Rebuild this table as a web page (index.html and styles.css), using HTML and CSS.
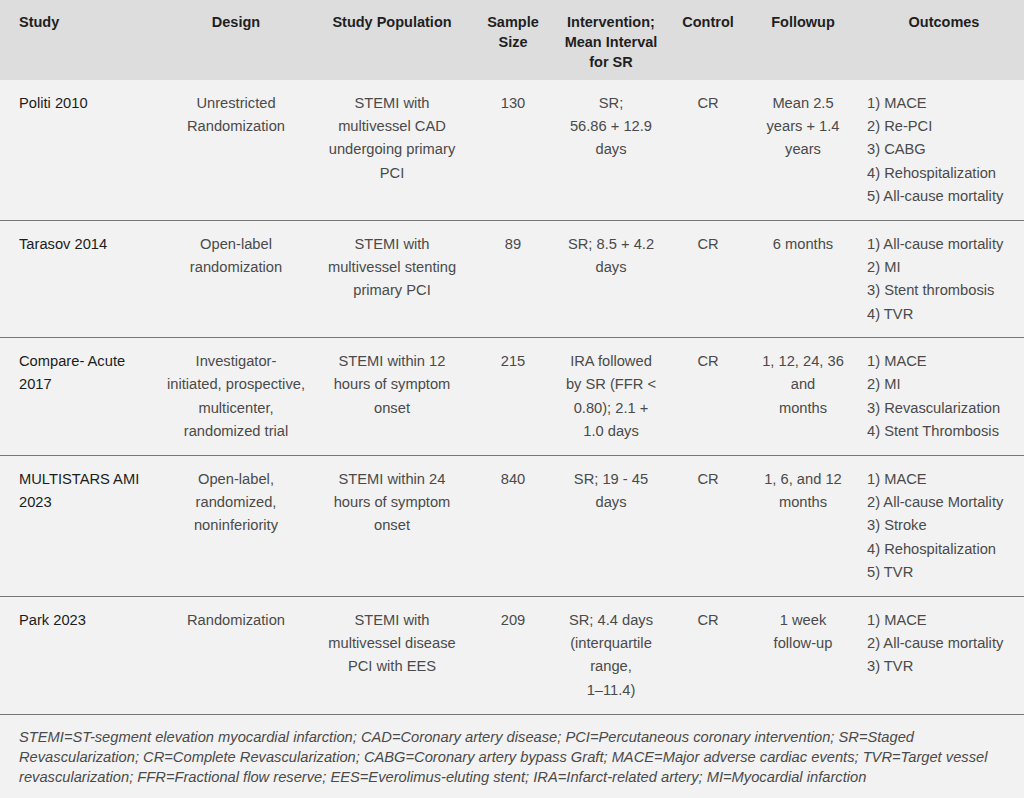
FILE: index.html
```html
<!DOCTYPE html>
<html lang="en">
<head>
<meta charset="utf-8">
<title>Staged vs complete revascularization trials</title>
<link rel="stylesheet" href="styles.css">
</head>
<body>
<div class="page">
  <table class="trials">
    <colgroup>
      <col class="c-study">
      <col class="c-design">
      <col class="c-pop">
      <col class="c-size">
      <col class="c-int">
      <col class="c-ctrl">
      <col class="c-fu">
      <col class="c-out">
    </colgroup>
    <thead>
      <tr>
        <th class="study">Study</th>
        <th>Design</th>
        <th>Study Population</th>
        <th>Sample<br>Size</th>
        <th>Intervention;<br>Mean Interval<br>for SR</th>
        <th>Control</th>
        <th>Followup</th>
        <th class="out">Outcomes</th>
      </tr>
    </thead>
    <tbody>
      <tr>
        <td class="study">Politi 2010</td>
        <td>Unrestricted<br>Randomization</td>
        <td>STEMI with<br>multivessel CAD<br>undergoing primary<br>PCI</td>
        <td>130</td>
        <td>SR;<br>56.86 + 12.9<br>days</td>
        <td>CR</td>
        <td>Mean 2.5<br>years + 1.4<br>years</td>
        <td class="out">1) MACE<br>2) Re-PCI<br>3) CABG<br>4) Rehospitalization<br>5) All-cause mortality</td>
      </tr>
      <tr>
        <td class="study">Tarasov 2014</td>
        <td>Open-label<br>randomization</td>
        <td>STEMI with<br>multivessel stenting<br>primary PCI</td>
        <td>89</td>
        <td>SR; 8.5 + 4.2<br>days</td>
        <td>CR</td>
        <td>6 months</td>
        <td class="out">1) All-cause mortality<br>2) MI<br>3) Stent thrombosis<br>4) TVR</td>
      </tr>
      <tr>
        <td class="study">Compare- Acute<br>2017</td>
        <td>Investigator-<br>initiated, prospective,<br>multicenter,<br>randomized trial</td>
        <td>STEMI within 12<br>hours of symptom<br>onset</td>
        <td>215</td>
        <td>IRA followed<br>by SR (FFR &lt;<br>0.80); 2.1 +<br>1.0 days</td>
        <td>CR</td>
        <td>1, 12, 24, 36<br>and<br>months</td>
        <td class="out">1) MACE<br>2) MI<br>3) Revascularization<br>4) Stent Thrombosis</td>
      </tr>
      <tr>
        <td class="study">MULTISTARS AMI<br>2023</td>
        <td>Open-label,<br>randomized,<br>noninferiority</td>
        <td>STEMI within 24<br>hours of symptom<br>onset</td>
        <td>840</td>
        <td>SR; 19 - 45<br>days</td>
        <td>CR</td>
        <td>1, 6, and 12<br>months</td>
        <td class="out">1) MACE<br>2) All-cause Mortality<br>3) Stroke<br>4) Rehospitalization<br>5) TVR</td>
      </tr>
      <tr>
        <td class="study">Park 2023</td>
        <td>Randomization</td>
        <td>STEMI with<br>multivessel disease<br>PCI with EES</td>
        <td>209</td>
        <td>SR; 4.4 days<br>(interquartile<br>range,<br>1–11.4)</td>
        <td>CR</td>
        <td>1 week<br>follow-up</td>
        <td class="out">1) MACE<br>2) All-cause mortality<br>3) TVR</td>
      </tr>
    </tbody>
  </table>
  <p class="notes">STEMI=ST-segment elevation myocardial infarction; CAD=Coronary artery disease; PCI=Percutaneous coronary intervention; SR=Staged<br>Revascularization; CR=Complete Revascularization; CABG=Coronary artery bypass Graft; MACE=Major adverse cardiac events; TVR=Target vessel<br>revascularization; FFR=Fractional flow reserve; EES=Everolimus-eluting stent; IRA=Infarct-related artery; MI=Myocardial infarction</p>
</div>
</body>
</html>
```
FILE: styles.css
```css
html, body {
  margin: 0;
  padding: 0;
  background: #f2f2f2;
}

.page {
  width: 1024px;
  min-height: 798px;
  background: #f2f2f2;
  font-family: "Liberation Sans", Arial, sans-serif;
  color: #4a4a4a;
}

.trials {
  width: 1024px;
  border-collapse: collapse;
  table-layout: fixed;
}

.c-study { width: 160px; }
.c-design { width: 152px; }
.c-pop { width: 160px; }
.c-size { width: 82px; }
.c-int { width: 114px; }
.c-ctrl { width: 80px; }
.c-fu { width: 110px; }
.c-out { width: 166px; }

.trials th {
  background: #dddddd;
  color: #1f1f1f;
  font-weight: bold;
  font-size: 14.5px;
  line-height: 20px;
  text-align: center;
  vertical-align: top;
  padding: 12px 2px 8px;
  height: 60px;
}

.trials td {
  font-size: 14.7px;
  line-height: 23.35px;
  text-align: center;
  vertical-align: top;
  padding: 11.6px 2px 11.6px;
  white-space: nowrap;
}

.trials tbody tr + tr td {
  border-top: 1px solid #777777;
}

.trials .study {
  text-align: left;
  padding-left: 19px;
}

.trials td.study {
  color: #1c1c1c;
}

.trials td.out {
  text-align: left;
  padding-left: 9px;
}

.trials th.out {
  padding-left: 6px;
  padding-right: 0;
}

.notes {
  margin: 0;
  border-top: 1px solid #777777;
  padding: 12px 0 0 19px;
  font-size: 14.7px;
  line-height: 20px;
  font-style: italic;
  color: #4a4a4a;
  white-space: nowrap;
}
```
